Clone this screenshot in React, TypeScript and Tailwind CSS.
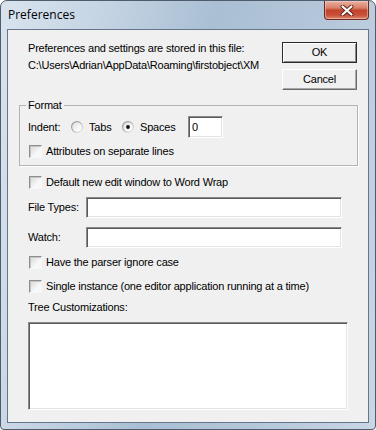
import React from 'react';

const dlgFont = "font-['Liberation_Sans',Arial,sans-serif] text-[11px] leading-[13px] tracking-[-0.2px] text-black";

const sunken =
    'border border-t-[#8a8a8a] border-l-[#8a8a8a] border-b-white border-r-white shadow-[inset_1px_1px_0_#5a5a5a,inset_-1px_-1px_0_#e3e3e3] bg-white';

function Checkbox({ label }: { label: string }) {
    return (
        <div className="flex h-[14px] items-center pl-[21px]">
            <span className="h-[13px] w-[13px] border border-t-[#8e8e8e] border-l-[#8e8e8e] border-b-[#f7f7f7] border-r-[#f7f7f7] bg-[linear-gradient(135deg,#d8d8d8,#f8f8f8_65%)] shadow-[inset_1px_1px_0_#c4c4c4]" />
            <span className="ml-[4px]">{label}</span>
        </div>
    );
}

function Radio({ id, checked }: { id: string; checked?: boolean }) {
    return (
        <svg width="12" height="12" viewBox="0 0 12 12" className="shrink-0">
            <defs>
                <linearGradient id={`${id}-s`} x1="0" y1="0" x2="1" y2="1">
                    <stop offset="0" stopColor="#8c8c8c" />
                    <stop offset="0.5" stopColor="#b4b4b4" />
                    <stop offset="1" stopColor="#f2f2f2" />
                </linearGradient>
                <linearGradient id={`${id}-f`} x1="0" y1="0" x2="1" y2="1">
                    <stop offset="0" stopColor="#dcdcdc" />
                    <stop offset="0.7" stopColor="#fbfbfb" />
                </linearGradient>
            </defs>
            <circle cx="6" cy="6" r="5.4" fill={`url(#${id}-f)`} stroke={`url(#${id}-s)`} strokeWidth="1.2" />
            {checked && <circle cx="6" cy="6" r="1.9" fill="#111" />}
        </svg>
    );
}

function Button({ label, isDefault }: { label: string; isDefault?: boolean }) {
    return (
        <div
            className={`flex h-[21px] w-[75px] items-center justify-center bg-[#f0f0f0] ${
                isDefault
                    ? 'border border-[#2a2a2a] shadow-[inset_1px_1px_0_#fff,inset_-1px_-1px_0_#8a8a8a]'
                    : 'border border-t-white border-l-white border-b-[#6c6c6c] border-r-[#6c6c6c] shadow-[inset_-1px_-1px_0_#a8a8a8]'
            }`}
        >
            {label}
        </div>
    );
}

function FieldRow({ label, className }: { label: string; className?: string }) {
    return (
        <div className={`flex h-[21px] items-center pl-[20px] ${className ?? ''}`}>
            <span className="w-[58px]">{label}</span>
            <div className={`h-[21px] w-[256px] ${sunken}`} />
        </div>
    );
}

export default function App() {
    return (
        <div className="h-[430px] w-[376px] bg-white">
            <div className="flex h-full w-full flex-col rounded-t-[7px] rounded-b-[4px] border border-[#4e5c6c] bg-[linear-gradient(100deg,#d8e3ee_0%,#c6d5e4_22%,#aabfd4_48%,#b4c6d9_72%,#c9d7e6_100%)] px-[6px] pb-[6px]">
                <div className="flex h-[28px] shrink-0 items-start">
                    <div className="flex h-[27px] items-center pl-[1px] font-['Open_Sans','Noto_Sans',sans-serif] text-[12px] text-black">
                        Preferences
                    </div>
                    <div className="ml-auto flex h-[19px] w-[45px] items-center justify-center rounded-b-[4px] border border-t-0 border-[#6f2a1e] bg-[linear-gradient(180deg,#eab1a2_0%,#d9806a_38%,#c2432c_52%,#c9503a_78%,#dd8a70_100%)] shadow-[inset_0_0_0_1px_rgba(255,220,210,0.45)]">
                        <svg width="14" height="11" viewBox="0 0 14 11">
                            <path d="M2.5 1.5 L11.5 9.5 M11.5 1.5 L2.5 9.5" stroke="#5a2018" strokeWidth="4" strokeLinecap="round" />
                            <path d="M2.5 1.5 L11.5 9.5 M11.5 1.5 L2.5 9.5" stroke="#ffffff" strokeWidth="2.2" strokeLinecap="round" />
                        </svg>
                    </div>
                </div>

                <div className={`flex flex-1 flex-col border border-[#66768a] bg-[#f0f0f0] ${dlgFont}`}>
                    <div className="flex h-[69px] shrink-0">
                        <div className="whitespace-nowrap pt-[10px] pl-[20px] leading-[17px]">
                            <div>Preferences and settings are stored in this file:</div>
                            <div>C:\Users\Adrian\AppData\Roaming\firstobject\XM</div>
                        </div>
                        <div className="ml-auto flex flex-col gap-[6px] pt-[12px] pr-[11px]">
                            <Button label="OK" isDefault />
                            <Button label="Cancel" />
                        </div>
                    </div>

                    <fieldset className="ml-[11px] w-[339px] border border-[#b4b4b4] px-[6px] pb-[7px] shadow-[1px_1px_0_#fff]">
                        <legend className="px-[2px] leading-[13px]">Format</legend>
                        <div className="mt-[4px] flex h-[22px] items-center pl-[2px]">
                            <span className="w-[43px]">Indent:</span>
                            <Radio id="tabs" />
                            <span className="ml-[6px] w-[33px]">Tabs</span>
                            <Radio id="spaces" checked />
                            <span className="ml-[6px] w-[48px]">Spaces</span>
                            <div className={`flex h-[22px] w-[35px] items-center pl-[3px] ${sunken}`}>0</div>
                        </div>
                        <div className="-ml-[18px] mt-[6px]">
                            <Checkbox label="Attributes on separate lines" />
                        </div>
                    </fieldset>

                    <div className="mt-[9px]">
                        <Checkbox label="Default new edit window to Word Wrap" />
                    </div>
                    <FieldRow label="File Types:" className="mt-[8px]" />
                    <FieldRow label="Watch:" className="mt-[9px]" />
                    <div className="mt-[7px]">
                        <Checkbox label="Have the parser ignore case" />
                    </div>
                    <div className="mt-[10px]">
                        <Checkbox label="Single instance (one editor application running at a time)" />
                    </div>
                    <div className="mt-[8px] pl-[20px]">Tree Customizations:</div>
                    <div className={`mt-[8px] ml-[20px] h-[88px] w-[320px] ${sunken}`} />
                </div>
            </div>
        </div>
    );
}
